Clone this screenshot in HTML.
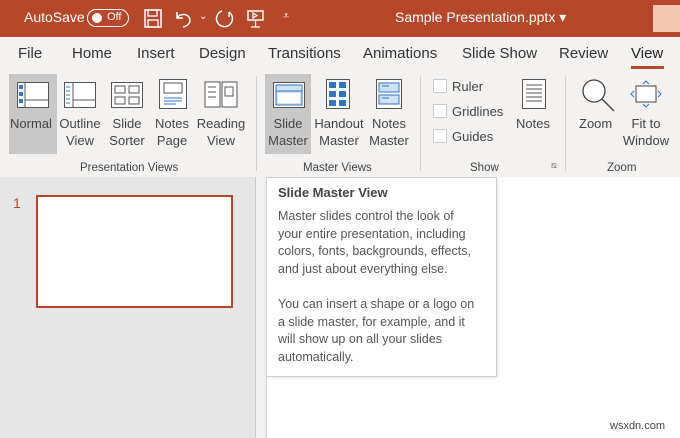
<!DOCTYPE html><html><head><style>
*{margin:0;padding:0;box-sizing:border-box}
body{width:680px;height:438px;overflow:hidden;position:relative;font-family:"Liberation Sans",sans-serif;background:#fff;color:#444}
.a{position:absolute}
.t{position:absolute;font-size:13px;color:#444;text-align:center;line-height:17px;white-space:nowrap}
.tab{position:absolute;top:45px;font-size:15px;color:#333}
svg{position:absolute;overflow:visible}
</style></head><body>
<div class="a" style="left:0;top:0;width:680px;height:37px;background:#b7472a"></div>
<div class="a" style="left:24px;top:9px;color:#fff;font-size:14px">AutoSave</div>
<div class="a" style="left:87px;top:9px;width:42px;height:18px;border:1.5px solid #fff;border-radius:9px"></div>
<div class="a" style="left:92px;top:13px;width:10px;height:10px;border-radius:5px;background:#fff"></div>
<div class="a" style="left:107px;top:11px;color:#fff;font-size:11px">Off</div>
<svg style="left:144px;top:9px" width="18" height="20"><rect x="1" y="1" width="16" height="17" fill="none" stroke="#fff" stroke-width="1.5"/><rect x="4" y="1" width="9" height="6" fill="none" stroke="#fff" stroke-width="1.3"/><rect x="4" y="11" width="10" height="7" fill="none" stroke="#fff" stroke-width="1.3"/></svg>
<svg style="left:174px;top:9px" width="20" height="20"><path d="M3 3v6h6M3 9c3-5 12-5 13 2 0 4-3 6-7 7" fill="none" stroke="#fff" stroke-width="1.5"/></svg>
<div class="a" style="left:199px;top:11px;color:#fff;font-size:10px">⌄</div>
<svg style="left:215px;top:9px" width="20" height="20"><path d="M7 2 A8 8 0 1 0 14 3 M14 3v5" fill="none" stroke="#fff" stroke-width="1.5"/></svg>
<svg style="left:247px;top:9px" width="18" height="20"><rect x="1" y="2" width="15" height="9" fill="none" stroke="#fff" stroke-width="1.5"/><path d="M8.5 11v7M4 18h9M6 4l4 2.5-4 2.5z" fill="none" stroke="#fff" stroke-width="1.3"/></svg>
<div class="a" style="left:283px;top:10px;color:#fff;font-size:11px">⩡</div>
<div class="a" style="left:395px;top:9px;color:#fff;font-size:14px">Sample Presentation.pptx ▾</div>
<div class="a" style="left:653px;top:5px;width:27px;height:27px;background:#f4c6b5"></div>
<div class="a" style="left:0;top:37px;width:680px;height:140px;background:#f3f2f1"></div>
<div class="tab" style="left:18px">File</div><div class="tab" style="left:72px">Home</div><div class="tab" style="left:137px">Insert</div><div class="tab" style="left:199px">Design</div><div class="tab" style="left:268px">Transitions</div><div class="tab" style="left:363px">Animations</div><div class="tab" style="left:462px">Slide Show</div><div class="tab" style="left:559px">Review</div><div class="tab" style="left:631px;color:#222">View</div>
<div class="a" style="left:631px;top:66px;width:33px;height:3px;background:#b7472a"></div>
<div class="a" style="left:9px;top:74px;width:48px;height:80px;background:#c8c8c8"></div>
<div class="a" style="left:265px;top:74px;width:46px;height:80px;background:#c8c8c8"></div>
<svg style="left:17px;top:82px" width="32" height="27"><rect x="0.5" y="0.5" width="31" height="25" fill="#fff" stroke="#555"/><path d="M8 1v25M8 18h24" stroke="#555"/><rect x="2" y="3" width="4" height="4" fill="#2e75c7"/><rect x="2" y="10" width="4" height="4" fill="#2e75c7"/><rect x="2" y="17" width="4" height="4" fill="#2e75c7"/></svg>
<svg style="left:64px;top:82px" width="32" height="27"><rect x="0.5" y="0.5" width="31" height="25" fill="#fff" stroke="#555"/><path d="M9 1v25M9 18h23" stroke="#555"/><path d="M2 5h4M2 9h4M2 13h4M2 17h4M2 21h4" stroke="#2e75c7"/></svg>
<svg style="left:111px;top:82px" width="32" height="27"><rect x="0.5" y="0.5" width="31" height="25" fill="#fff" stroke="#555"/><rect x="4" y="4" width="10" height="7" fill="none" stroke="#555"/><rect x="18" y="4" width="10" height="7" fill="none" stroke="#555"/><rect x="4" y="15" width="10" height="7" fill="none" stroke="#555"/><rect x="18" y="15" width="10" height="7" fill="none" stroke="#555"/></svg>
<svg style="left:159px;top:79px" width="28" height="30"><rect x="0.5" y="0.5" width="27" height="29" fill="#fff" stroke="#555"/><rect x="5" y="4" width="18" height="10" fill="none" stroke="#555"/><path d="M5 19h18M5 22h18M5 25h12" stroke="#2e75c7"/></svg>
<svg style="left:204px;top:81px" width="34" height="28"><path d="M1 1h15v25H1zM18 1h15v25H18z" fill="#fff" stroke="#555"/><path d="M4 6h8M4 11h8M4 16h8M21 6h8v9h-8z" fill="none" stroke="#555"/></svg>
<div class="t" style="left:10px;top:115px">Normal</div>
<div class="t" style="left:58px;top:115px;width:44px">Outline<br>View</div>
<div class="t" style="left:106px;top:115px;width:42px">Slide<br>Sorter</div>
<div class="t" style="left:152px;top:115px;width:40px">Notes<br>Page</div>
<div class="t" style="left:196px;top:115px;width:50px">Reading<br>View</div>
<div class="t" style="left:80px;top:160px;font-size:11.5px">Presentation Views</div>
<div class="a" style="left:256px;top:76px;width:1px;height:95px;background:#d0d0d0"></div>
<svg style="left:273px;top:82px" width="32" height="27"><rect x="0.5" y="0.5" width="31" height="25" fill="#fff" stroke="#555"/><rect x="3" y="3" width="26" height="20" fill="#cfe3f7" stroke="#2e75c7"/><path d="M3 9h26" stroke="#2e75c7"/><rect x="5" y="11" width="22" height="10" fill="#fff"/></svg>
<svg style="left:326px;top:79px" width="24" height="30"><rect x="0.5" y="0.5" width="23" height="29" fill="#fff" stroke="#555"/><g fill="#2e75c7"><rect x="3" y="3" width="7" height="6"/><rect x="13" y="3" width="7" height="6"/><rect x="3" y="12" width="7" height="6"/><rect x="13" y="12" width="7" height="6"/><rect x="3" y="21" width="7" height="6"/><rect x="13" y="21" width="7" height="6"/></g></svg>
<svg style="left:376px;top:79px" width="26" height="30"><rect x="0.5" y="0.5" width="25" height="29" fill="#fff" stroke="#555"/><rect x="3" y="4" width="20" height="9" fill="#cfe3f7" stroke="#2e75c7"/><rect x="3" y="16" width="20" height="9" fill="#cfe3f7" stroke="#2e75c7"/><path d="M6 7h7M6 19h7" stroke="#2e75c7"/></svg>
<div class="t" style="left:265px;top:115px;width:46px">Slide<br>Master</div>
<div class="t" style="left:312px;top:115px;width:54px">Handout<br>Master</div>
<div class="t" style="left:367px;top:115px;width:44px">Notes<br>Master</div>
<div class="t" style="left:303px;top:160px;font-size:11.5px">Master Views</div>
<div class="a" style="left:420px;top:76px;width:1px;height:95px;background:#d0d0d0"></div>
<div class="a" style="left:433px;top:79px;width:14px;height:14px;border:1px solid #c8c8c8;background:#fff"></div>
<div class="a" style="left:433px;top:104px;width:14px;height:14px;border:1px solid #c8c8c8;background:#fff"></div>
<div class="a" style="left:433px;top:129px;width:14px;height:14px;border:1px solid #c8c8c8;background:#fff"></div>
<div class="t" style="left:452px;top:78px">Ruler</div>
<div class="t" style="left:452px;top:103px">Gridlines</div>
<div class="t" style="left:452px;top:128px">Guides</div>
<svg style="left:522px;top:79px" width="24" height="30"><rect x="0.5" y="0.5" width="23" height="29" fill="#fff" stroke="#555"/><path d="M4 6h16M4 10h16M4 14h16M4 18h16M4 22h16" stroke="#555"/></svg>
<div class="t" style="left:516px;top:115px">Notes</div>
<div class="t" style="left:470px;top:160px;font-size:11.5px">Show</div>
<div class="a" style="left:551px;top:160px;font-size:9px;color:#666">⧅</div>
<div class="a" style="left:565px;top:76px;width:1px;height:95px;background:#d0d0d0"></div>
<svg style="left:582px;top:79px" width="34" height="34"><circle cx="12" cy="12" r="11" fill="#fff" stroke="#444" stroke-width="1.3"/><path d="M20 20l12 12" stroke="#444" stroke-width="1.5"/></svg>
<div class="t" style="left:579px;top:115px">Zoom</div>
<svg style="left:630px;top:80px" width="34" height="30"><rect x="6" y="6" width="20" height="16" fill="#fff" stroke="#444"/><path d="M13 4l3-3 3 3M13 24l3 3 3-3M4 11l-3 3 3 3M28 11l3 3-3 3" fill="none" stroke="#2e75c7"/></svg>
<div class="t" style="left:620px;top:115px;width:52px">Fit to<br>Window</div>
<div class="t" style="left:607px;top:160px;font-size:11.5px">Zoom</div>
<div class="a" style="left:0;top:177px;width:255px;height:261px;background:#e6e6e6"></div>
<div class="a" style="left:255px;top:177px;width:1px;height:261px;background:#c8c8c8"></div>
<div class="a" style="left:256px;top:177px;width:10px;height:261px;background:#efefef"></div>
<div class="a" style="left:266px;top:177px;width:1px;height:261px;background:#d0d0d0"></div>
<div class="a" style="left:13px;top:195px;color:#b7472a;font-size:14px">1</div>
<div class="a" style="left:36px;top:195px;width:197px;height:113px;border:2px solid #b7472a;background:#fff"></div>
<div class="a" style="left:266px;top:177px;width:231px;height:200px;background:#fff;border:1px solid #cfcfcf;box-shadow:1px 1px 2px rgba(0,0,0,.1)"></div>
<div class="a" style="left:278px;top:185px;font-size:13px;font-weight:bold;color:#444">Slide Master View</div>
<div class="a" style="left:278px;top:208px;font-size:12.5px;line-height:17.6px;color:#555;white-space:nowrap">Master slides control the look of<br>your entire presentation, including<br>colors, fonts, backgrounds, effects,<br>and just about everything else.<br><br>You can insert a shape or a logo on<br>a slide master, for example, and it<br>will show up on all your slides<br>automatically.</div>
<div class="a" style="left:610px;top:420px;font-size:11px;color:#444">wsxdn.com</div>
</body></html>
